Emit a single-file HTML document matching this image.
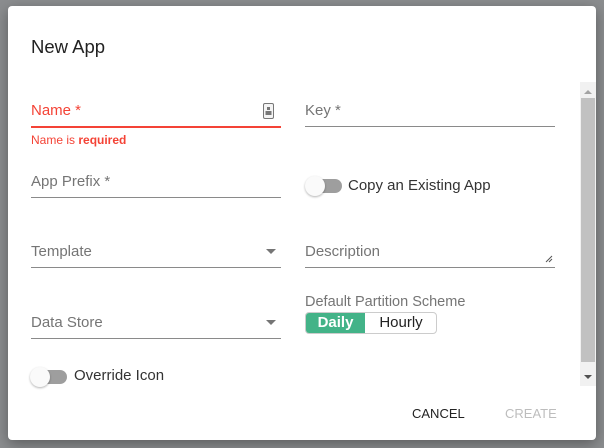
<!DOCTYPE html>
<html><head><meta charset="utf-8"><style>
*{margin:0;padding:0;box-sizing:border-box}
html,body{width:604px;height:448px;overflow:hidden;background:#8b8d8f;font-family:"Liberation Sans",sans-serif}
.dlg{position:absolute;left:8px;top:6px;width:588px;height:434px;background:#fff;border-radius:4px;box-shadow:0 4px 14px rgba(0,0,0,.35)}
.a{position:absolute;white-space:nowrap}
.lbl{font-size:15px;color:#757575}
.line{position:absolute;height:1px;background:#8a8a8a}
.tri{position:absolute;width:0;height:0;border-left:5px solid transparent;border-right:5px solid transparent;border-top:5px solid #757575}
.sw{position:absolute;width:34px;height:14px;border-radius:7px;background:#9e9e9e}
.sw::after{content:"";position:absolute;left:-3px;top:-3px;width:20px;height:20px;border-radius:50%;background:#fafafa;box-shadow:0 1px 2px rgba(0,0,0,.3)}
.sl{font-size:15px;color:#333}
</style></head><body>
<div class="dlg">
 <div class="a" style="left:23px;top:30px;font-size:18.5px;color:#222">New App</div>

 <div class="a lbl" style="left:23px;top:96px;color:#f44336">Name *</div>
 <svg class="a" style="left:255px;top:97px" width="11" height="16" viewBox="0 0 11 16"><rect x="0.5" y="0.5" width="10" height="15" rx="1.5" fill="#f4f4f4" stroke="#777"/><rect x="4" y="4" width="3" height="3" fill="#777"/><rect x="2.5" y="8" width="6" height="4" fill="#777"/></svg>
 <div class="line" style="left:23px;top:120px;width:250px;height:1.5px;background:#f44336"></div>
 <div class="a" style="left:23px;top:127px;font-size:12px;color:#f44336">Name is <b>required</b></div>

 <div class="a lbl" style="left:297px;top:96px">Key *</div>
 <div class="line" style="left:297px;top:120px;width:250px"></div>

 <div class="a lbl" style="left:23px;top:167px">App Prefix *</div>
 <div class="line" style="left:23px;top:191px;width:250px"></div>

 <div class="sw" style="left:300px;top:173px"></div>
 <div class="a sl" style="left:340px;top:171px">Copy an Existing App</div>

 <div class="a lbl" style="left:23px;top:237px">Template</div>
 <div class="tri" style="left:258px;top:243px"></div>
 <div class="line" style="left:23px;top:261px;width:250px"></div>

 <div class="a lbl" style="left:297px;top:237px">Description</div>
 <svg class="a" style="left:537px;top:249px" width="8" height="8"><path d="M1 7L7 1M4 7L7 4" stroke="#555" stroke-width="1"/></svg>
 <div class="line" style="left:297px;top:261px;width:250px"></div>

 <div class="a lbl" style="left:297px;top:288px;font-size:14.5px">Default Partition Scheme</div>
 <div class="a" style="left:297px;top:306px;width:132px;height:22px;border:1px solid #ccc;border-radius:4px;overflow:hidden;font-size:15px">
  <div class="a" style="left:0;top:0;width:59px;height:20px;background:#43b388;color:#fff;text-align:center;line-height:20px;font-weight:bold">Daily</div>
  <div class="a" style="left:59px;top:0;width:72px;height:20px;color:#222;text-align:center;line-height:20px">Hourly</div>
 </div>

 <div class="a lbl" style="left:23px;top:308px">Data Store</div>
 <div class="tri" style="left:258px;top:314px"></div>
 <div class="line" style="left:23px;top:332px;width:250px"></div>

 <div class="sw" style="left:25px;top:364px"></div>
 <div class="a sl" style="left:66px;top:361px">Override Icon</div>

 <div class="a" style="left:404px;top:400px;font-size:13px;color:#222">CANCEL</div>
 <div class="a" style="left:497px;top:400px;font-size:13px;color:#bdbdbd">CREATE</div>

 <div class="a" style="left:572px;top:76px;width:16px;height:304px;background:#f1f1f1"></div>
 <div class="a" style="left:573px;top:92px;width:14px;height:264px;background:#c1c1c1"></div>
 <div class="a" style="left:576px;top:84px;width:0;height:0;border-left:4px solid transparent;border-right:4px solid transparent;border-bottom:4px solid #a3a3a3"></div>
 <div class="a" style="left:576px;top:369px;width:0;height:0;border-left:4px solid transparent;border-right:4px solid transparent;border-top:4px solid #505050"></div>
</div>
</body></html>
